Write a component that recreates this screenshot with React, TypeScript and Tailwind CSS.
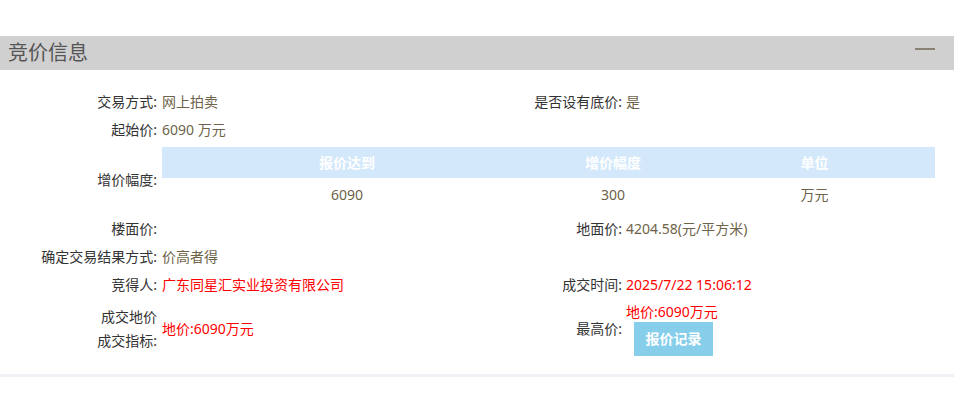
const labelCls = "text-right text-[#333]";
const valueCls = "pl-[5px] text-[#6e634a]";

function Row({ label, value, label2, value2, red, red2 }: {
  label: string;
  value?: string;
  label2?: string;
  value2?: string;
  red?: boolean;
  red2?: boolean;
}) {
  return (
    <div className="grid h-[28px] grid-cols-[157px_320px_145px_1fr] items-center">
      <div className={labelCls}>{label}</div>
      <div className={red ? "pl-[5px] text-[#ff0000]" : valueCls}>{value}</div>
      <div className={labelCls}>{label2}</div>
      <div className={red2 ? "pl-[4px] text-[#ff0000]" : "pl-[4px] text-[#6e634a]"}>{value2}</div>
    </div>
  );
}

export default function App() {
  return (
    <div
      className="min-h-screen bg-white pt-[36px] text-[14px] leading-none"
      style={{ fontFamily: '"Noto Sans", "Noto Sans CJK SC", sans-serif' }}
    >
      <div className="flex h-[34px] items-center justify-between bg-[#d0d0d0] pl-[8px] pr-[19px]">
        <span className="text-[20px] text-[#555]">竞价信息</span>
        <span className="mb-[8px] block h-[2px] w-[20px] bg-[#8a8272]" />
      </div>

      <div className="pt-[18px]">
        <Row label="交易方式:" value="网上拍卖" label2="是否设有底价:" value2="是" />
        <Row label="起始价:" value="6090 万元" />

        <div className="flex items-center py-[3px] pr-[19px]">
          <div className={"w-[157px] " + labelCls}>增价幅度:</div>
          <div className="ml-[5px] flex-1">
            <div className="grid h-[31px] grid-cols-[370px_162px_1fr] items-center bg-[#d4e8fb] text-center font-bold text-white">
              <span>报价达到</span>
              <span>增价幅度</span>
              <span>单位</span>
            </div>
            <div className="grid h-[34px] grid-cols-[370px_162px_1fr] items-center text-center text-[#6e634a]">
              <span>6090</span>
              <span>300</span>
              <span>万元</span>
            </div>
          </div>
        </div>

        <Row label="楼面价:" label2="地面价:" value2="4204.58(元/平方米)" />
        <Row label="确定交易结果方式:" value="价高者得" />
        <Row label="竞得人:" value="广东同星汇实业投资有限公司" red label2="成交时间:" value2="2025/7/22 15:06:12" red2 />

        <div className="grid grid-cols-[157px_320px_145px_1fr] items-center pt-[3px] pb-[18px]">
          <div className="text-right leading-[24px] text-[#333]">
            成交地价
            <br />
            成交指标:
          </div>
          <div className="pl-[5px] text-[#ff0000]">地价:6090万元</div>
          <div className={labelCls}>最高价:</div>
          <div className="flex flex-col items-start pl-[4px]">
            <span className="leading-[20px] text-[#ff0000]">地价:6090万元</span>
            <button
              type="button"
              className="ml-[8px] h-[34px] w-[79px] bg-[#87ceeb] font-bold text-white"
            >
              报价记录
            </button>
          </div>
        </div>

        <div className="h-[3px] bg-[#eff1f4]" />
      </div>
    </div>
  );
}
